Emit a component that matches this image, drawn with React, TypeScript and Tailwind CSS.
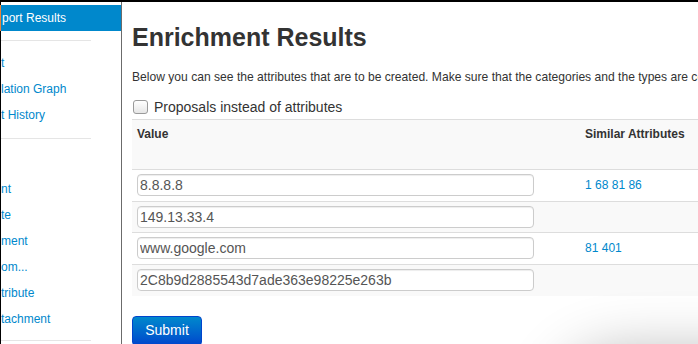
import React from 'react';

const font = { fontFamily: '"Liberation Sans", Arial, sans-serif' };

const topLinks = ['t', 'lation Graph', 't History'];
const bottomLinks = ['nt', 'te', 'ment', 'om...', 'tribute', 'tachment'];

const rows = [
  { value: '8.8.8.8', similar: ['1', '68', '81', '86'] },
  { value: '149.13.33.4', similar: [] },
  { value: 'www.google.com', similar: ['81', '401'] },
  { value: '2C8b9d2885543d7ade363e98225e263b', similar: [] },
];

const Sidebar: React.FC = () => (
  <div className="w-[121px] shrink-0 flex flex-col border-r border-[#6b6b6b] text-[12px] overflow-hidden">
    <div className="h-[3px]" />
    <div className="h-[26px] bg-[#0088cc] text-white leading-[26px] pl-px whitespace-nowrap">port Results</div>
    <div className="mt-[9px] h-px w-[90px] bg-[#e5e5e5]" />
    <div className="mt-[9px] flex flex-col">
      {topLinks.map((l) => (
        <div key={l} className="h-[26px] leading-[26px] text-[#0088cc] whitespace-nowrap">{l}</div>
      ))}
    </div>
    <div className="mt-[10px] h-px w-[90px] bg-[#e5e5e5]" />
    <div className="mt-[37px] flex flex-col">
      {bottomLinks.map((l) => (
        <div key={l} className="h-[26px] leading-[26px] text-[#0088cc] whitespace-nowrap">{l}</div>
      ))}
    </div>
    <div className="mt-[8px] h-px w-[90px] bg-[#e5e5e5]" />
  </div>
);

export default function App() {
  return (
    <div className="relative w-[698px] h-[344px] overflow-hidden bg-white border-t-2 border-black flex text-[#333]" style={font}>
      <div className="w-px shrink-0 flex flex-col">
        <div className="h-[3px] bg-black" />
        <div className="h-[26px] bg-[#e8833a]" />
        <div className="flex-1 bg-black" />
      </div>
      <Sidebar />
      <div className="flex-1 pl-[10px] overflow-hidden">
        <h2 className="mt-[20px] text-[25px] font-bold leading-[30px] text-[#333] whitespace-nowrap">Enrichment Results</h2>
        <p className="mt-[16px] text-[12.1px] leading-[18px] whitespace-nowrap">
          Below you can see the attributes that are to be created. Make sure that the categories and the types are correct, you can modify them before submitting.
        </p>
        <label className="mt-[11px] flex items-center h-[20px] text-[14px] whitespace-nowrap">
          <span className="ml-px mr-[6px] w-[15px] h-[14px] rounded-[3px] border border-[#9a9a9a] bg-gradient-to-b from-white to-[#e6e6e6]" />
          Proposals instead of attributes
        </label>
        <table className="mt-[2px] w-[900px] border-collapse text-[12px] leading-[20px]">
          <thead>
            <tr className="bg-[#f9f9f9] border-t border-[#dddddd] h-[50px]">
              <th className="w-[448px] px-[5px] pt-[4px] align-top text-left font-bold">Value</th>
              <th className="w-[190px] px-[5px] pt-[4px] align-top text-left font-bold">Similar Attributes</th>
              <th className="px-[5px] pt-[4px] align-top text-left font-bold">Category</th>
            </tr>
          </thead>
          <tbody>
            {rows.map((r, i) => (
              <tr key={r.value} className={`h-[31.5px] border-t border-[#dddddd] ${i % 2 === 1 ? 'bg-[#f9f9f9]' : 'bg-white'}`}>
                <td className="px-[5px] py-[4px] align-middle">
                  <input
                    readOnly
                    value={r.value}
                    className="w-[397px] h-[22px] px-[2px] rounded-[4px] border border-[#cccccc] bg-white text-[14px] text-[#555] shadow-[inset_0_1px_1px_rgba(0,0,0,0.075)] outline-none"
                    style={font}
                  />
                </td>
                <td className="px-[5px] py-[4px] align-middle text-[#0088cc] whitespace-nowrap">
                  {r.similar.map((s, j) => (
                    <span key={j}>{s}{j < r.similar.length - 1 ? ' ' : ''}</span>
                  ))}
                </td>
                <td className="px-[5px] py-[4px]" />
              </tr>
            ))}
          </tbody>
        </table>
        <button
          className="mt-[20px] h-[30px] w-[70px] rounded-[4px] border border-[#0044cc] bg-gradient-to-b from-[#0088cc] to-[#0044cc] text-white text-[14px]"
          style={font}
        >
          Submit
        </button>
      </div>
      <div className="absolute left-[560px] top-[352px] w-[500px] h-[200px] rounded-[60px] bg-white shadow-[0_0_60px_rgba(0,0,0,0.3)]" />
    </div>
  );
}
